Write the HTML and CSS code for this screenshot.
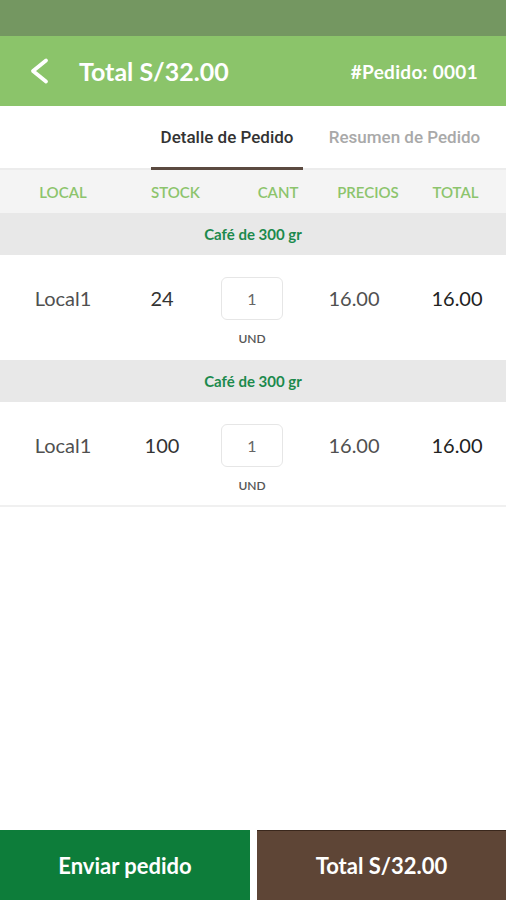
FILE: index.html
```html
<!DOCTYPE html>
<html lang="es">
<head>
    <meta charset="UTF-8">
    <meta name="viewport" content="width=device-width, initial-scale=1.0">
    <title>Detalle de Pedido</title>
    <link rel="stylesheet" href="styles.css">
</head>
<body>
    <div class="app">
        <div class="status-bar"></div>

        <header class="toolbar">
            <button class="back-btn" aria-label="Volver">
                <svg width="22" height="28" viewBox="0 0 22 28">
                    <path d="M17 3.5 L4 14 L17 24.5" fill="none" stroke="#fff" stroke-width="3.8" stroke-linecap="round" stroke-linejoin="round"/>
                </svg>
            </button>
            <h1 class="title">Total S/32.00</h1>
            <span class="order-no">#Pedido: 0001</span>
        </header>

        <nav class="tabs">
            <div class="tab active">Detalle de Pedido</div>
            <div class="tab">Resumen de Pedido</div>
        </nav>

        <div class="col-head">
            <span>LOCAL</span>
            <span>STOCK</span>
            <span>CANT</span>
            <span>PRECIOS</span>
            <span>TOTAL</span>
        </div>

        <div class="group">Café de 300 gr</div>
        <div class="item">
            <span class="local">Local1</span>
            <span class="stock">24</span>
            <div class="qty">
                <div class="qty-box">1</div>
                <span class="unit">UND</span>
            </div>
            <span class="price">16.00</span>
            <span class="total">16.00</span>
        </div>

        <div class="group">Café de 300 gr</div>
        <div class="item last">
            <span class="local">Local1</span>
            <span class="stock">100</span>
            <div class="qty">
                <div class="qty-box">1</div>
                <span class="unit">UND</span>
            </div>
            <span class="price">16.00</span>
            <span class="total">16.00</span>
        </div>

        <div class="spacer"></div>

        <footer class="actions">
            <button class="btn send">Enviar pedido</button>
            <button class="btn sum">Total S/32.00</button>
        </footer>
    </div>
</body>
</html>
```

FILE: styles.css
```css
body {
    margin: 0;
    padding: 0;
    font-family: Lato, "Open Sans", sans-serif;
    background: #fff;
}

.app {
    width: 506px;
    height: 900px;
    display: flex;
    flex-direction: column;
    overflow: hidden;
}

.status-bar {
    height: 36px;
    background: #749761;
}

.toolbar {
    height: 70px;
    background: #8bc46a;
    display: flex;
    align-items: center;
    padding: 0 28px 0 29px;
    color: #fff;
}

.back-btn {
    background: none;
    border: none;
    padding: 0;
    width: 26px;
    height: 28px;
    display: flex;
    align-items: center;
    cursor: pointer;
}

.title {
    margin: 0 0 0 24px;
    font-size: 25px;
    font-weight: 700;
    flex: 1;
}

.order-no {
    font-size: 19px;
    font-weight: 700;
    letter-spacing: 0.3px;
}

.tabs {
    height: 62px;
    display: flex;
    justify-content: flex-end;
    border-bottom: 2px solid #ececec;
}

.tab {
    font-family: Roboto, sans-serif;
    font-size: 17px;
    font-weight: 500;
    color: #a9a9a9;
    width: 203px;
    height: 60px;
    display: flex;
    align-items: center;
    justify-content: center;
    padding-top: 1px;
    margin-bottom: -2px;
    border-bottom: 2px solid transparent;
}

.tab.active {
    color: #333;
    width: 152px;
    border-bottom: 3px solid #5b4a40;
    height: 60px;
}

.col-head {
    height: 43px;
    background: #f4f4f4;
    display: grid;
    grid-template-columns: 126px 99px 106px 74px 101px;
    align-items: center;
    text-align: center;
    font-size: 15px;
    font-weight: 600;
    color: #8cc46c;
}

.group {
    height: 42px;
    background: #e8e8e8;
    display: flex;
    align-items: center;
    justify-content: center;
    font-size: 15px;
    font-weight: 700;
    color: #1c8a4d;
}

.item {
    height: 105px;
    box-sizing: border-box;
    padding-top: 22px;
    display: grid;
    grid-template-columns: 126px 72px 108px 96px 104px;
    align-items: start;
    text-align: center;
    font-size: 20px;
    line-height: 43px;
    color: #505050;
}

.item.last {
    border-bottom: 2px solid #f0f0f0;
}

.stock {
    color: #333;
}

.total {
    color: #222;
    padding-left: 6px;
}

.qty {
    display: flex;
    flex-direction: column;
    align-items: center;
}

.qty-box {
    width: 60px;
    height: 41px;
    border: 1px solid #e6e6e6;
    border-radius: 6px;
    display: flex;
    align-items: center;
    justify-content: center;
    font-size: 16px;
    color: #666;
    line-height: 1;
}

.unit {
    margin-top: 11px;
    font-size: 12px;
    line-height: 15px;
    font-weight: 600;
    color: #555;
}

.spacer {
    flex: 1;
}

.actions {
    height: 70px;
    display: flex;
    gap: 7px;
}

.btn {
    flex: 1;
    border: none;
    margin: 0;
    font-family: Lato, sans-serif;
    font-size: 22px;
    font-weight: 700;
    color: #fff;
    cursor: pointer;
}

.btn.send {
    background: #0d7d3a;
    flex: 0 0 250px;
}

.btn.sum {
    background: #5e4536;
    border-top: 1px solid #3a271c;
}
```
